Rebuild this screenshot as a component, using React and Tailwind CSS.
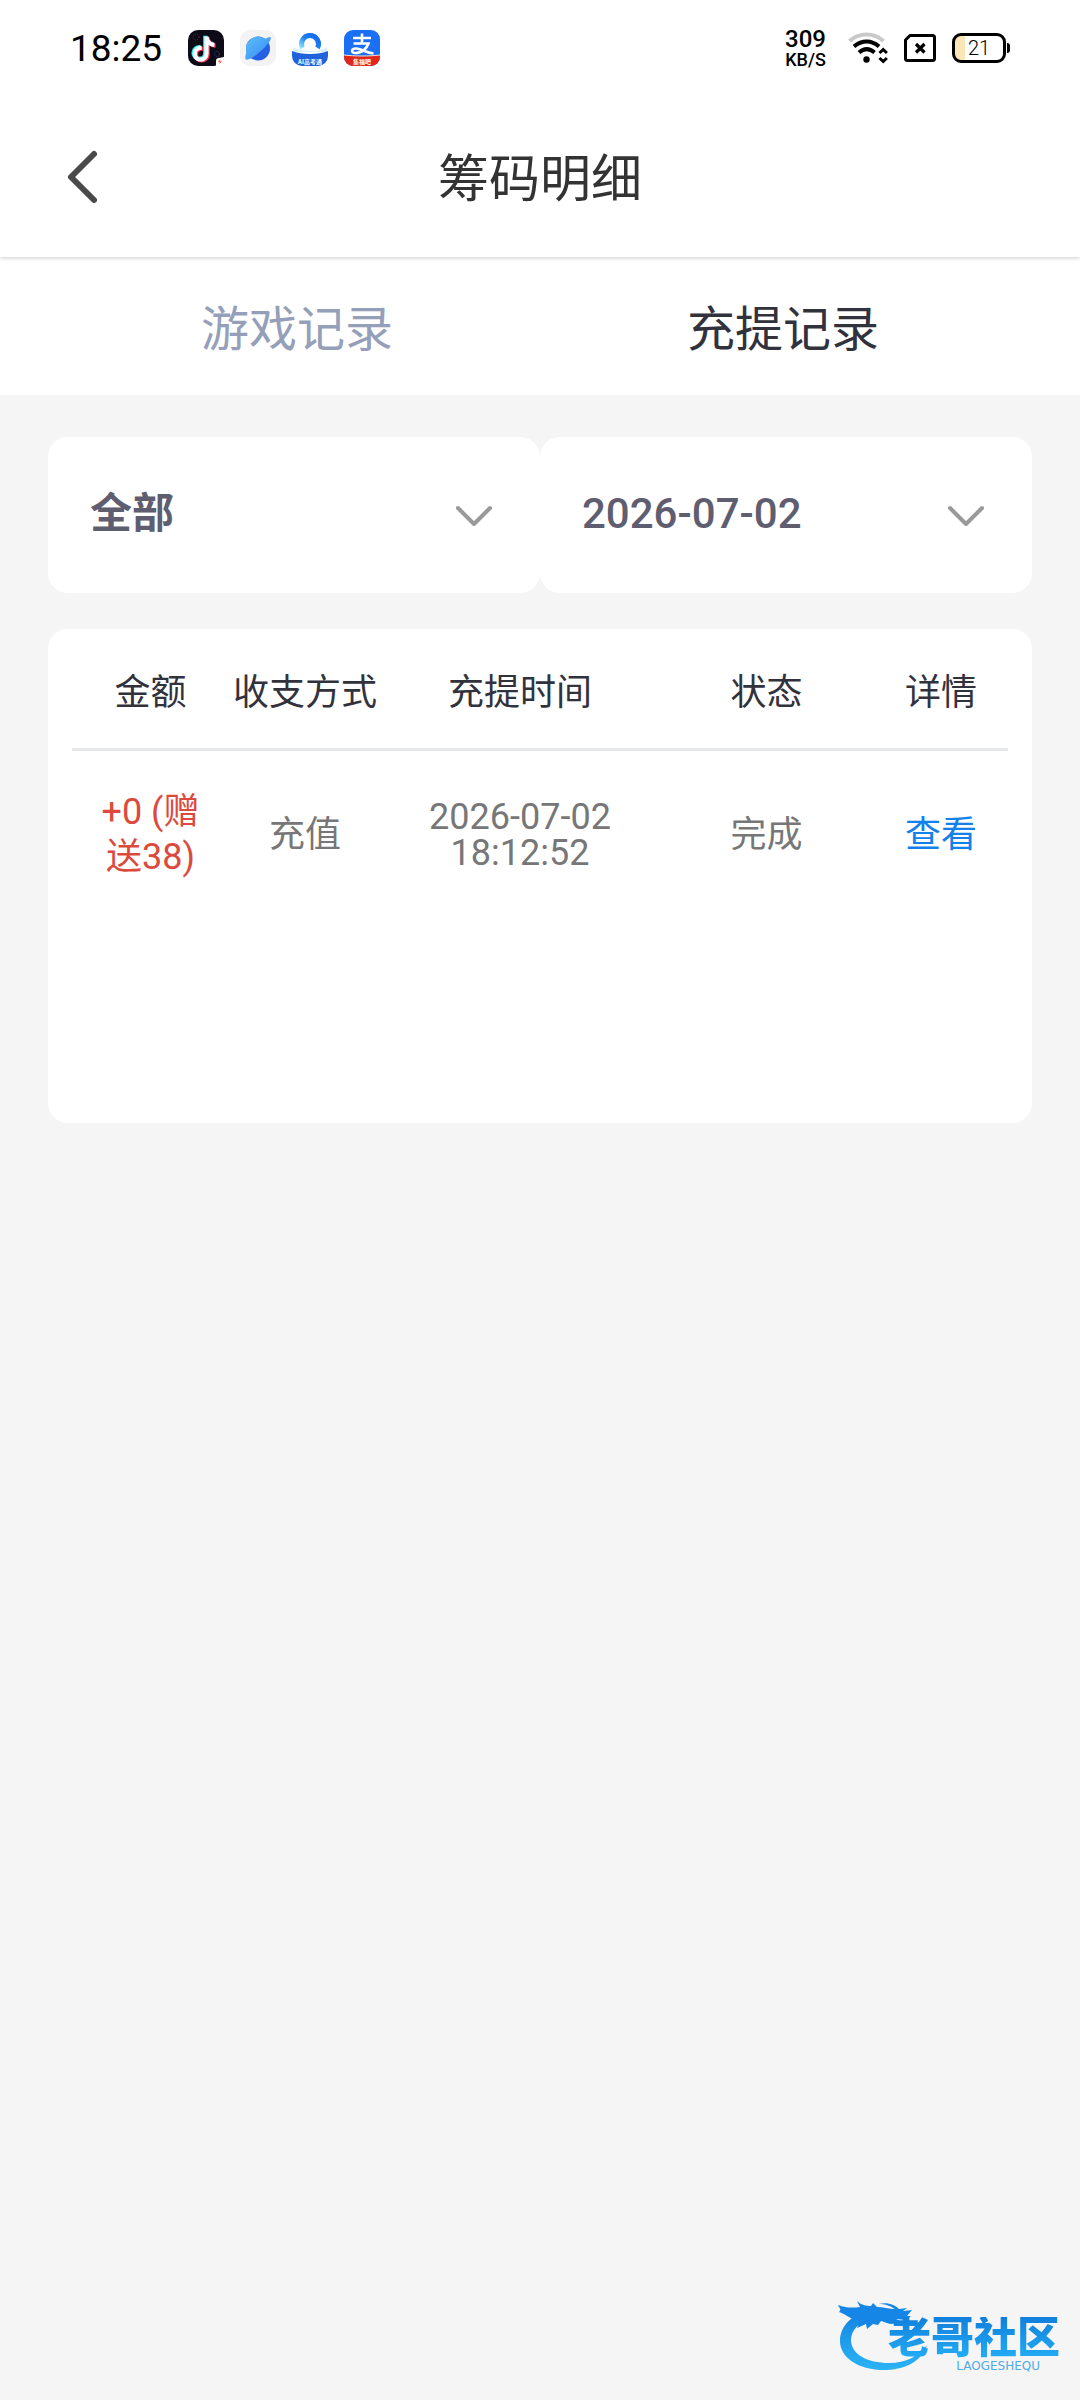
import React, { useState } from "react";

function TikTokIcon() {
  const note = "M20.6 6.5h-4.2v17.2a3.7 3.7 0 1 1-3.7-3.7c.4 0 .7 0 1 .1v-4.2a8 8 0 1 0 6.9 7.8v-8.7c1.7 1.2 3.6 1.9 5.8 1.9v-4.2c-3.2 0-5.8-2.8-5.8-6.2z";
  return (
    <svg viewBox="0 0 36 36" className="size-9" aria-hidden="true">
      <rect width="36" height="36" rx="10" fill="#0d0b16" />
      <circle cx="8" cy="7" r="3" fill="none" stroke="#8a1d42" strokeWidth="1" strokeDasharray="1 1.5" />
      <circle cx="29" cy="24" r="2.5" fill="none" stroke="#2c3f9a" strokeWidth="1" strokeDasharray="1 1" />
      <path d={note} fill="#25f4ee" transform="translate(-1.2 -.8)" />
      <path d={note} fill="#fe2c55" transform="translate(1.2 .8)" />
      <path d={note} fill="#fff" />
      <path d="M36 27v1a8 8 0 0 1-8 8v-5a3 3 0 0 1 3-3z" fill="#fff" />
      <path d="M32.5 29l-2.5 3h2l-1 2.5 3-3.3h-2z" fill="#f0552f" />
    </svg>
  );
}

function BrowserIcon() {
  return (
    <svg viewBox="0 0 36 36" className="size-9" aria-hidden="true">
      <defs>
        <linearGradient id="planet" x1="0" y1="0" x2="1" y2="1">
          <stop offset="0" stopColor="#5fc0fb" />
          <stop offset="1" stopColor="#3487f2" />
        </linearGradient>
      </defs>
      <rect width="36" height="36" rx="10" fill="#f3f3f4" />
      <circle cx="18" cy="18.5" r="12" fill="#245fe6" />
      <path d="M6.5 22A12 12 0 0 1 25 9c3-2 5-2.6 5.7-1.5 1.1 2-4 8.5-10.4 14C14 27 7.500 31 5.700 29.300 4.800 28.300 5.300 25.500 6.500 22z" fill="url(#planet)" />
    </svg>
  );
}

function CloudIcon() {
  return (
    <svg viewBox="0 0 36 36" className="size-9" aria-hidden="true">
      <defs>
        <linearGradient id="ring" x1="0" y1="1" x2="1" y2="0">
          <stop offset="0" stopColor="#8fe4fb" />
          <stop offset=".5" stopColor="#1e7ef0" />
          <stop offset="1" stopColor="#1269ee" />
        </linearGradient>
      </defs>
      <path d="M1 17c8 5 26 5 34 0v5H1z" fill="#d5effb" />
      <path d="M10.5 18a8.5 8.5 0 1 1 15 0" fill="none" stroke="url(#ring)" strokeWidth="5" />
      <path d="M11 20c0-5 7-6 9-2 3-2 7 0 7 3z" fill="#fff" />
      <path d="M0 21c9 4 27 4 36 0v5a10 10 0 0 1-10 10H10A10 10 0 0 1 0 26z" fill="#1f62dc" />
      <text x="18" y="34" textAnchor="middle" fontSize="6" fontWeight="700" fill="#fff" fontFamily="'Noto Sans CJK SC', sans-serif">AI高考通</text>
    </svg>
  );
}

function PayIcon() {
  return (
    <svg viewBox="0 0 36 36" className="size-9" aria-hidden="true">
      <defs>
        <clipPath id="payShape">
          <rect width="36" height="36" rx="9" />
        </clipPath>
      </defs>
      <g clipPath="url(#payShape)">
        <rect width="36" height="36" fill="#1a6ff5" />
        <path d="M9 8h18M18 3.5V13M9.5 13.5h15c-1.5 4-6 10-14 9.5-4-.5-3-5 2-4.5 6 .5 9 4 17 5" fill="none" stroke="#fff" strokeWidth="2.6" />
        <path d="M0 25.5c10 1 26 1 36 0V36H0z" fill="#e3261c" />
        <path d="M0 25c10 1.3 26 1.3 36 0" fill="none" stroke="#ffd9c0" strokeWidth="1" />
        <text x="18" y="34" textAnchor="middle" fontSize="6" fontWeight="700" fill="#fff" fontFamily="'Noto Sans CJK SC', sans-serif">集福吧</text>
      </g>
    </svg>
  );
}

function StatusBar() {
  return (
    <div className="flex h-24 items-center justify-between px-[70px] text-black">
      <div className="flex items-center gap-4">
        <span className="mr-2.5 text-[37px] leading-none">18:25</span>
        <TikTokIcon />
        <BrowserIcon />
        <CloudIcon />
        <PayIcon />
      </div>
      <div className="flex items-center gap-4">
        <div className="mr-1.5 flex flex-col items-center font-medium">
          <span className="text-[24px] leading-6">309</span>
          <span className="text-[18px] leading-[18px]">KB/S</span>
        </div>
        <svg viewBox="0 0 40 32" className="h-8 w-10" fill="none" aria-label="Wi-Fi">
          <path d="M1.5 9c10-8.6 24-8.6 34 0" stroke="#c9c9c9" strokeWidth="4" />
          <path d="M6 14.5c8-6.7 17.5-6.7 25 0" stroke="#000" strokeWidth="4" />
          <path d="M11 20.5c5-4.3 10.5-4.3 15.5 0" stroke="#000" strokeWidth="4" />
          <circle cx="18.5" cy="27.5" r="3.2" fill="#000" />
          <path d="M31.5 21l3.7-3.5 3.7 3.5M31.5 26l3.7 3.5 3.7-3.5" stroke="#000" strokeWidth="3" />
        </svg>
        <svg viewBox="0 0 32 28" className="h-7 w-8" fill="none" stroke="#000" aria-label="无 SIM 卡">
          <path d="M6 1.5h22.500a2 2 0 0 1 2 2v21a2 2 0 0 1-2 2h-25a2 2 0 0 1-2-2V6z" strokeWidth="3" strokeLinejoin="round" />
          <path d="M12 10l8.5 8.5M20.5 10L12 18.5" strokeWidth="3.2" />
        </svg>
        <div className="flex items-center gap-px">
          <div className="flex h-[30px] w-[54px] items-center justify-center rounded-[9px] border-3 border-black bg-linear-to-r from-[#fbe7b5] from-21% to-white to-21% text-[20px] leading-none font-light">21</div>
          <div className="h-2.5 w-[3px] rounded-r bg-black" />
        </div>
      </div>
    </div>
  );
}

function Header() {
  return (
    <header className="relative z-10 bg-white shadow-[0_1px_4px_rgba(0,0,0,0.2)]">
      <StatusBar />
      <div className="grid h-[161px] grid-cols-[1fr_auto_1fr] items-center px-[60px]">
        <button type="button" aria-label="返回" className="flex h-20 w-14 items-center">
          <svg viewBox="0 0 44 56" className="h-14 w-11" fill="none" stroke="#4a4a4a" strokeWidth="6" strokeLinecap="round" strokeLinejoin="round">
            <path d="M34 5L11 28l23 23" />
          </svg>
        </button>
        <h1 className="pt-1.5 text-[51px] leading-none text-[#333]">筹码明细</h1>
      </div>
    </header>
  );
}

function Tabs() {
  const [active, setActive] = useState("充提记录");
  return (
    <div role="tablist" className="flex h-[138px] bg-white px-[54px]">
      {["游戏记录", "充提记录"].map((name) => (
        <button
          key={name}
          type="button"
          role="tab"
          aria-selected={active === name}
          onClick={() => setActive(name)}
          className={"flex-1 pt-2 text-[48px] leading-none " + (active === name ? "text-[#32323d]" : "text-[#969fb9]")}
        >
          {name}
        </button>
      ))}
    </div>
  );
}

function Filter({ label, value, weight }) {
  return (
    <label className="relative flex h-[156px] flex-1 items-center rounded-[20px] bg-white">
      <select aria-label={label} className={"h-full w-full appearance-none rounded-[20px] bg-transparent px-[42px] pb-1 text-[42px] text-[#5f5e70] " + weight}>
        <option>{value}</option>
      </select>
      <svg viewBox="0 0 40 26" className="pointer-events-none absolute right-[46px] h-[26px] w-10" fill="none" stroke="#999" strokeWidth="4" strokeLinecap="round" strokeLinejoin="round">
        <path d="M4 6l16 16L36 6" />
      </svg>
    </label>
  );
}

function Records() {
  return (
    <section className="min-h-[494px] rounded-[20px] bg-white px-6">
      <table className="w-full table-fixed text-center text-[36px] leading-9">
        <thead className="text-[#32323d]">
          <tr className="h-[120px] border-b-3 border-[#e6e7eb]">
            <th className="w-[157px] pt-2.5 font-normal">金额</th>
            <th className="w-[152px] pt-2.5 font-normal">收支方式</th>
            <th className="w-[278px] pt-2.5 font-normal">充提时间</th>
            <th className="w-[215px] pt-2.5 font-normal">状态</th>
            <th className="w-[134px] pt-2.5 font-normal">详情</th>
          </tr>
        </thead>
        <tbody className="text-[#777]">
          <tr className="h-[170px]">
            <td className="px-6 leading-[45px] text-[#dc4a3d]">+0 (赠送38)</td>
            <td>充值</td>
            <td className="px-10">2026-07-02 18:12:52</td>
            <td>完成</td>
            <td>
              <a href="#detail" className="text-[#1480ea]">查看</a>
            </td>
          </tr>
        </tbody>
      </table>
    </section>
  );
}

function Watermark() {
  return (
    <div className="absolute right-5 bottom-6 flex h-[76px] w-[222px] items-end justify-end">
      <svg viewBox="0 0 222 76" className="absolute inset-0 h-full w-full" aria-hidden="true">
        <defs>
          <linearGradient id="dragon" x1="0" y1="0" x2="0" y2="1">
            <stop offset="0" stopColor="#1182e2" />
            <stop offset="1" stopColor="#2bb4f5" />
          </linearGradient>
        </defs>
        <path d="M32 10C14 14 2 26 2 41c0 18 21 30 47 29 21-1 35-10 40-25-8 11-21 18-38 18-22 0-38-9-38-23 0-10 8-17 20-23z" fill="url(#dragon)" />
        <path d="M0 5c8 3 15 3 22 2l-3-6c4 4 9 5 14 5l2-3 4 4c6 0 12 2 18 2-6-4-11-5-16-5 9-2 16 1 20 5l8-1-4 3 9-1-5 6h4l-5 4-10-1 8 4-14 1-9-3-3 4-5-1-6 5-1-5-9 4 3-7-7-2c-5-2-8-5-14-7C4 9 1 8 0 5z" fill="#1586e6" />
      </svg>
      <div className="relative flex flex-col items-end pb-1">
        <span className="bg-linear-to-b from-[#117fdc] to-[#25aef5] bg-clip-text text-[43px] leading-[43px] font-black text-transparent">老哥社区</span>
        <span className="mr-5 font-['DejaVu_Sans'] text-[12px] leading-3 text-[#4faae8]">LAOGESHEQU</span>
      </div>
    </div>
  );
}

export default function App() {
  return (
    <div className="relative min-h-screen bg-[#f5f5f5] font-[Roboto,'Noto_Sans_CJK_SC',sans-serif]">
      <Header />
      <Tabs />
      <main className="flex flex-col gap-9 px-12 pt-[42px]">
        <div className="flex">
          <Filter label="类型" value="全部" weight="font-semibold" />
          <Filter label="日期" value="2026-07-02" weight="font-medium" />
        </div>
        <Records />
      </main>
      <Watermark />
    </div>
  );
}
